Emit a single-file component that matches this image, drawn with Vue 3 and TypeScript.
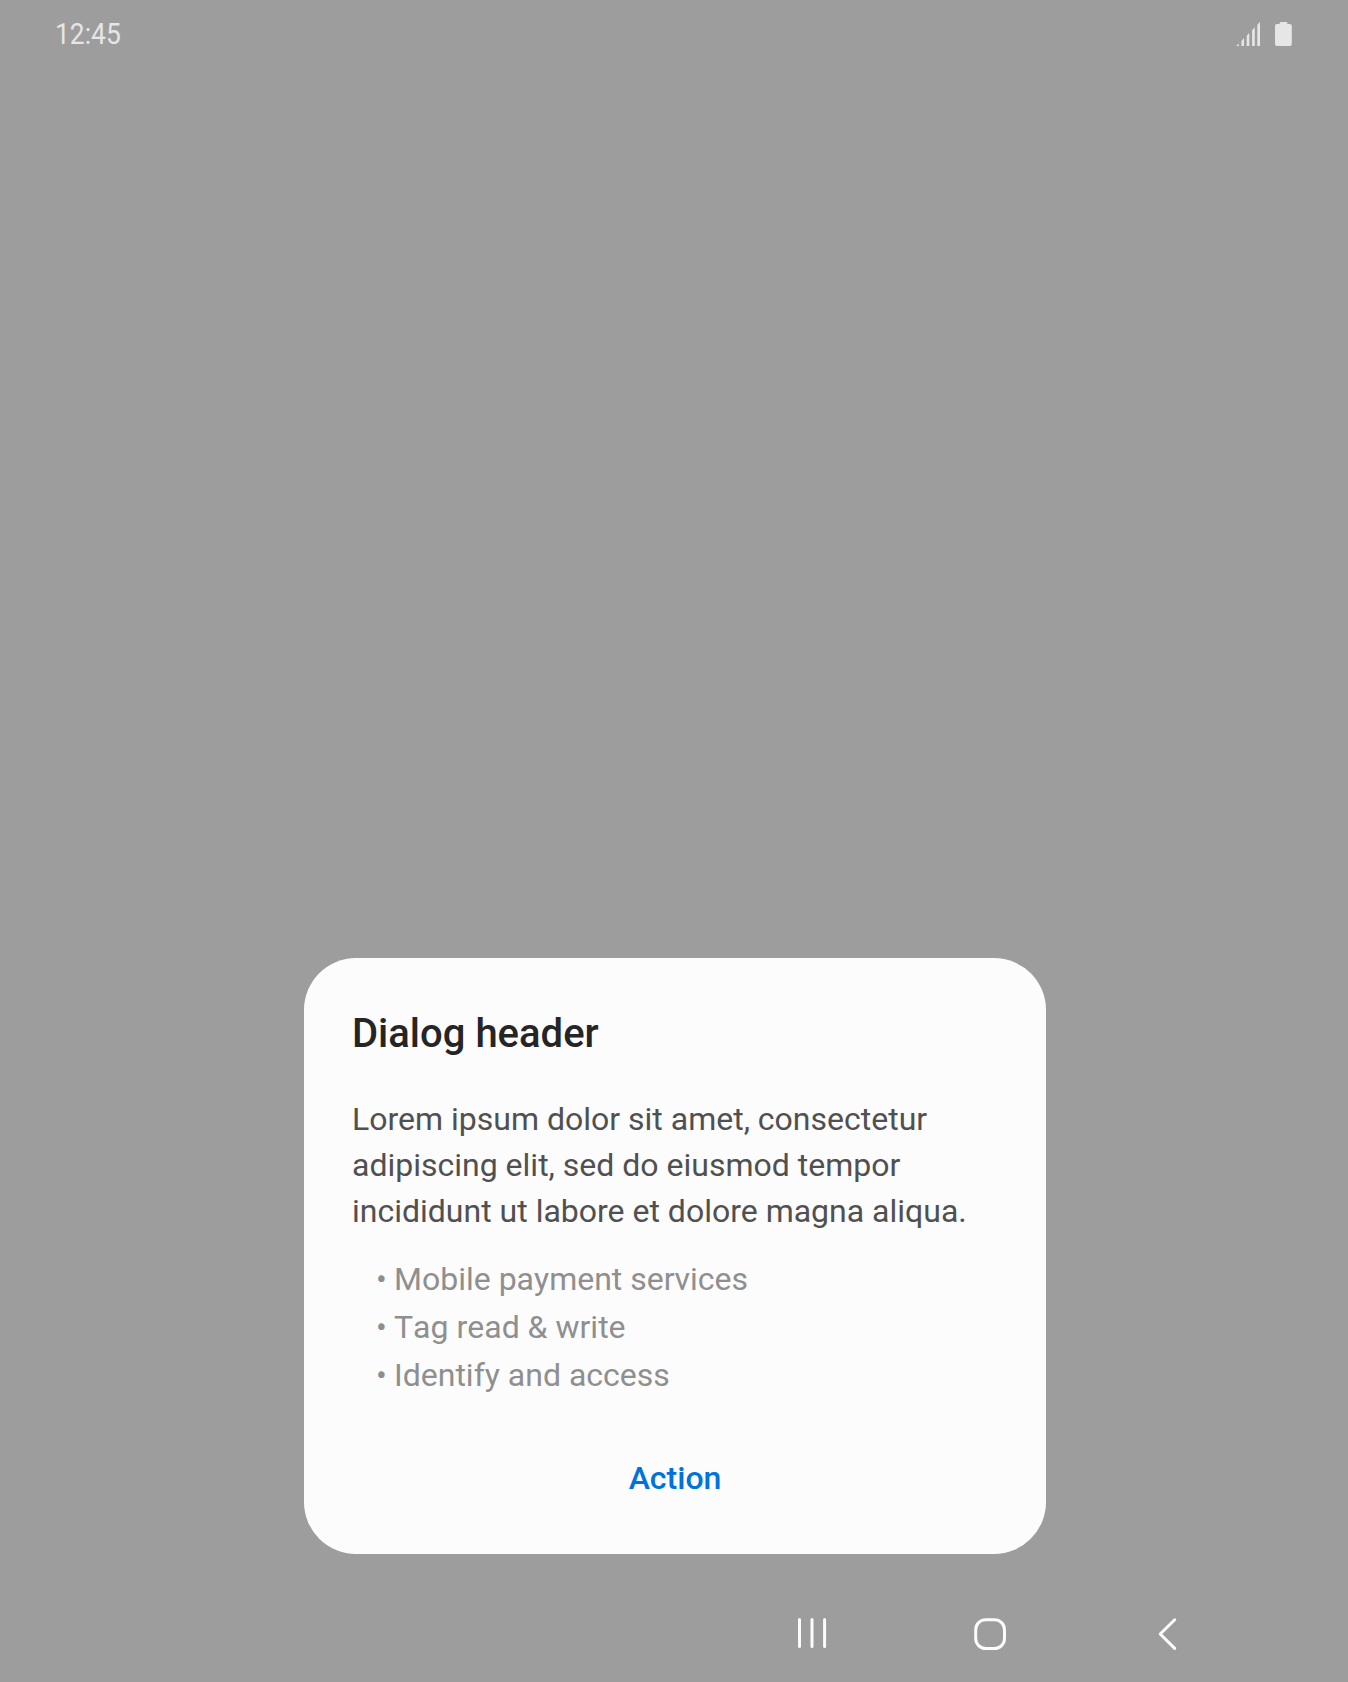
<script setup lang="ts">
const items: string[] = ['Mobile payment services', 'Tag read & write', 'Identify and access']
const lines: string[] = [
  'Lorem ipsum dolor sit amet, consectetur',
  'adipiscing elit, sed do eiusmod tempor',
  'incididunt ut labore et dolore magna aliqua.',
]
</script>

<template>
  <main class="screen">
    <header class="status">
      <span class="time">12:45</span>
      <svg class="indicators" width="60" height="30" viewBox="1234 20 60 30" fill="#e6e6e6">
        <path d="M1236.2 46l2.6-2.6v2.6zM1241.4 46v-5.1l2.6-2.8v7.9zM1246.7 46v-10.3l2.6-2.8v13.1zM1252.1 46v-15.8l2.7-2.9v18.7zM1257.3 46v-21.2l2.7-2.9v24.1z" />
        <path d="M1279.6 24v-.6q0-1.4 1.4-1.4h5q1.4 0 1.4 1.4v.6h2.4q2 0 2 2v18q0 2-2 2h-12.8q-2 0-2-2v-18q0-2 2-2z" />
      </svg>
    </header>
    <section class="dialog">
      <h1>Dialog header</h1>
      <p class="body"><span v-for="line in lines" :key="line">{{ line }}</span></p>
      <ul>
        <li v-for="item in items" :key="item"><span class="bullet">•</span><span>{{ item }}</span></li>
      </ul>
      <button type="button">Action</button>
    </section>
    <nav>
      <svg width="400" height="50" viewBox="790 1608 400 50" fill="none" stroke="#fcfcfc" stroke-width="3" stroke-linecap="round" stroke-linejoin="round">
        <path d="M799.5 1619.5v27M812 1619.5v27M824.6 1619.5v27" />
        <rect x="975.7" y="1619.7" width="28.8" height="28.8" rx="10" />
        <path d="M1174.7 1619.8l-14.5 14.2 14.5 14.4" />
      </svg>
    </nav>
  </main>
</template>

<style>
body { margin: 0; }
</style>

<style scoped>
.screen { width: 1348px; height: 1682px; background: #9d9d9d; font-family: Roboto, sans-serif; display: flex; flex-direction: column; overflow: hidden; }
.status { height: 958px; display: flex; justify-content: space-between; align-items: flex-start; box-sizing: border-box; padding: 19px 54px 0 55px; flex: none; }
.indicators { margin-top: 1px; }
.time { color: #e6e6e6; font-size: 30px; line-height: 30px; transform: scaleX(.88); transform-origin: left; }
.dialog { width: 742px; height: 596px; margin-left: 304px; border-radius: 52px; background: #fcfcfc; box-sizing: border-box; padding: 52px 48px 0; flex: none; display: flex; flex-direction: column; }
h1 { margin: 0; font-size: 40px; line-height: 48px; font-weight: 500; color: #252525; }
.body { margin: 38px 0 0; font-size: 32px; line-height: 46px; color: #505050; }
.body span { display: block; white-space: nowrap; }
ul { list-style: none; margin: 21px 0 0 24px; padding: 0; color: #8f8f8f; font-size: 32px; line-height: 48px; font-kerning: none; }
li { display: flex; }
.bullet { width: 18px; }
button { align-self: center; margin: 59px 0 0; padding: 0; border: 0; background: none; color: #0072de; font: 500 32px/40px Roboto, sans-serif; }
nav { padding: 54px 0 0 790px; }
svg { display: block; }
</style>
